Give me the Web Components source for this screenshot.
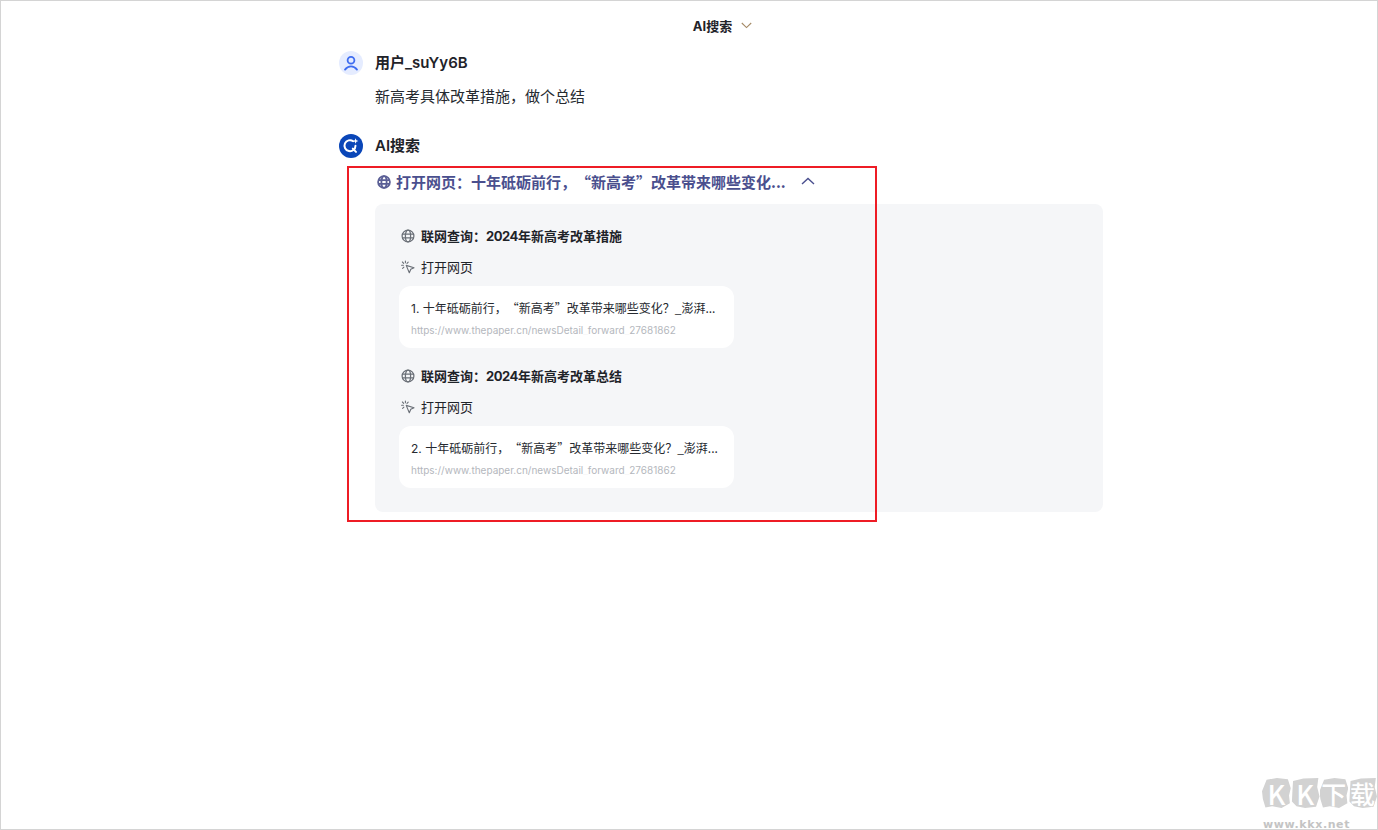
<!DOCTYPE html>
<html lang="zh-CN">
<head>
<meta charset="utf-8">
<title>AI搜索</title>
<style>
    html, body { margin: 0; height: 100%; background: #fff; }
    body { font-family: Inter, "Noto Sans CJK SC", sans-serif; color: #1f2329; }
</style>
</head>
<body>
<page-frame>
    <chat-header>AI搜索</chat-header>
    <chat-thread>
        <chat-message kind="user" name="用户_suYy6B">
            <p style="margin:0;font-size:15px;line-height:22px;color:#262a30">新高考具体改革措施，做个总结</p>
        </chat-message>
        <chat-message kind="ai" name="AI搜索">
            <step-panel titulo="打开网页：十年砥砺前行，“新高考”改革带来哪些变化...">
                <search-step query="联网查询：2024年新高考改革措施">
                    <result-card index="1" titulo="十年砥砺前行，“新高考”改革带来哪些变化？_澎湃..." url="https://www.thepaper.cn/newsDetail_forward_27681862"></result-card>
                </search-step>
                <search-step query="联网查询：2024年新高考改革总结">
                    <result-card index="2" titulo="十年砥砺前行，“新高考”改革带来哪些变化？_澎湃..." url="https://www.thepaper.cn/newsDetail_forward_27681862"></result-card>
                </search-step>
            </step-panel>
        </chat-message>
    </chat-thread>
    <red-frame></red-frame>
    <kk-watermark></kk-watermark>
</page-frame>

<script>
// iconos compartidos
const GLOBE = (color, w, size) => `
    <svg width="${size}" height="${size}" viewBox="0 0 14 14" fill="none" stroke="${color}" stroke-width="${w}">
        <circle cx="7" cy="7" r="5.9"/>
        <ellipse cx="7" cy="7" rx="2.6" ry="5.9"/>
        <path d="M1.1 5.1h11.8M1.1 8.9h11.8"/>
    </svg>`;

const CURSOR = `
    <svg width="14" height="14" viewBox="0 0 14 14" fill="none" stroke="#6b7078" stroke-width="1.1">
        <path d="M5.2 5.4l7.8 2.4-3.2 1.5-1.5 3.4z" stroke-linejoin="round"/>
        <path d="M4.4 1v1.8M1.4 2l1.3 1.3M.6 5.2h1.8M1.6 8.4l1.3-1.3M7.2 2.2L6 3.4" stroke-linecap="round"/>
    </svg>`;

class PageFrame extends HTMLElement {
    constructor() {
        super();
        this.attachShadow({ mode: 'open' }).innerHTML = `
            <style>
                :host {
                    display: block;
                    position: relative;
                    box-sizing: border-box;
                    width: 1378px;
                    height: 830px;
                    overflow: hidden;
                    border: 1px solid #d4d4d4;
                    background: #fff;
                }
            </style>
            <slot></slot>
        `;
    }
}
customElements.define('page-frame', PageFrame);

class ChatHeader extends HTMLElement {
    constructor() {
        super();
        this.attachShadow({ mode: 'open' }).innerHTML = `
            <style>
                :host {
                    display: flex;
                    justify-content: center;
                    align-items: center;
                    gap: 9px;
                    height: 20px;
                    padding: 14px 0 16px 67px;
                    font-size: 13px;
                    font-weight: 700;
                    color: #1f2329;
                }
                svg { display: block; }
            </style>
            <slot></slot>
            <svg width="11" height="7" viewBox="0 0 11 7" fill="none" stroke="#a58a66" stroke-width="1.1">
                <path d="M.8 1l4.7 4.6L10.2 1"/>
            </svg>
        `;
    }
}
customElements.define('chat-header', ChatHeader);

class ChatThread extends HTMLElement {
    constructor() {
        super();
        this.attachShadow({ mode: 'open' }).innerHTML = `
            <style>
                :host {
                    display: flex;
                    flex-direction: column;
                    gap: 26px;
                    width: 764px;
                    margin-left: 338px;
                }
            </style>
            <slot></slot>
        `;
    }
}
customElements.define('chat-thread', ChatThread);

class ChatMessage extends HTMLElement {
    constructor() {
        super();
        this.attachShadow({ mode: 'open' }).innerHTML = `
            <style>
                :host { display: block; }
                .head { display: flex; align-items: center; gap: 12px; height: 24px; }
                .avatar { width: 24px; height: 24px; flex: none; display: block; }
                .name { font-size: 15px; font-weight: 600; color: #1f2329; padding-bottom: 3px; }
                .body { padding: 11px 0 0 36px; }
            </style>
            <div class="head">
                <span class="avatar"></span>
                <span class="name"></span>
            </div>
            <div class="body"><slot></slot></div>
        `;
    }

    connectedCallback() {
        const s = this.shadowRoot;
        s.querySelector('.name').textContent = this.getAttribute('name');
        s.querySelector('.avatar').innerHTML = this.getAttribute('kind') === 'ai' ? `
            <svg width="24" height="24" viewBox="0 0 24 24" fill="none">
                <circle cx="12" cy="12" r="12" fill="#0a46b8"/>
                <path d="M14.2 7.2A5.5 5.5 0 1 0 16.5 11.7" stroke="#fff" stroke-width="2" stroke-linecap="round"/>
                <path d="M13.8 14.6l3.2 3.3" stroke="#fff" stroke-width="2" stroke-linecap="round"/>
                <path d="M16.6 4.2l.8 2 2 .8-2 .8-.8 2-.8-2-2-.8 2-.8z" fill="#fff"/>
            </svg>` : `
            <svg width="24" height="24" viewBox="0 0 24 24" fill="none">
                <circle cx="12" cy="12" r="12" fill="#e5ecff"/>
                <circle cx="12" cy="9.2" r="3.4" stroke="#3e6cf0" stroke-width="1.8"/>
                <path d="M6 18.6c1.6-2.2 3.6-3.2 6-3.2s4.4 1 6 3.2" stroke="#3e6cf0" stroke-width="1.8" stroke-linecap="round"/>
            </svg>`;
    }
}
customElements.define('chat-message', ChatMessage);

class StepPanel extends HTMLElement {
    constructor() {
        super();
        this.attachShadow({ mode: 'open' }).innerHTML = `
            <style>
                :host { display: block; }
                .head {
                    display: flex;
                    align-items: center;
                    height: 24px;
                    padding-left: 2px;
                    font-family: "Noto Sans CJK SC", sans-serif;
                    font-size: 15px;
                    font-weight: 700;
                    color: #4a4f8e;
                    text-spacing-trim: space-all;
                    font-feature-settings: "chws" 0, "palt" 0;
                }
                .ico { width: 14px; height: 14px; margin-right: 5px; }
                .ico svg, .up { display: block; }
                .ico svg { margin-top: 1px; }
                .up { margin-left: 15px; }
                .box {
                    display: flex;
                    flex-direction: column;
                    gap: 17px;
                    margin-top: 11px;
                    padding: 21px 0 24px 24px;
                    background: #f5f6f8;
                    border-radius: 8px;
                }
            </style>
            <div class="head">
                <span class="ico">${GLOBE('#5b5f96', 1.8, 14)}</span>
                <span class="tit"></span>
                <svg class="up" width="14" height="8" viewBox="0 0 14 8" fill="none" stroke="#4a4f8e" stroke-width="1.4">
                    <path d="M1 7l6-5.6L13 7"/>
                </svg>
            </div>
            <div class="box"><slot></slot></div>
        `;
    }

    connectedCallback() {
        this.shadowRoot.querySelector('.tit').textContent = this.getAttribute('titulo');
    }
}
customElements.define('step-panel', StepPanel);

class SearchStep extends HTMLElement {
    constructor() {
        super();
        this.attachShadow({ mode: 'open' }).innerHTML = `
            <style>
                :host { display: block; font-size: 13px; color: #1f2329; }
                .row { display: flex; align-items: center; gap: 6px; height: 20px; padding-left: 2px; }
                .row svg { display: block; margin-top: 2px; flex: none; }
                .q { font-weight: 700; margin-bottom: 11px; }
                .q .n { letter-spacing: -.45px; }
                .open { margin-bottom: 10px; }
            </style>
            <div class="row q">${GLOBE('#6b7078', 1.25, 14)}<span class="txt"></span></div>
            <div class="row open">${CURSOR}<span>打开网页</span></div>
            <slot></slot>
        `;
    }

    connectedCallback() {
        const q = this.getAttribute('query');
        this.shadowRoot.querySelector('.txt').innerHTML = q.replace(/\d+/, '<span class="n">$&</span>');
    }
}
customElements.define('search-step', SearchStep);

class ResultCard extends HTMLElement {
    constructor() {
        super();
        this.attachShadow({ mode: 'open' }).innerHTML = `
            <style>
                :host {
                    display: flex;
                    flex-direction: column;
                    box-sizing: border-box;
                    width: 335px;
                    height: 62px;
                    padding: 13px 12px 0;
                    background: #fff;
                    border-radius: 12px;
                }
                .t {
                    font-family: "Noto Sans CJK SC", sans-serif;
                    font-size: 12px;
                    line-height: 18px;
                    color: #262a30;
                    white-space: nowrap;
                    text-spacing-trim: space-all;
                    font-feature-settings: "chws" 0, "palt" 0;
                }
                .t .i { font-family: Inter, sans-serif; }
                .u {
                    font-size: 10px;
                    line-height: 12px;
                    height: 12px;
                    overflow: hidden;
                    margin-top: 6px;
                    color: #b4b7bd;
                    white-space: nowrap;
                }
                .u .b { opacity: .1; }
            </style>
            <div class="t"><span class="i"></span><span class="x"></span></div>
            <div class="u"></div>
        `;
    }

    connectedCallback() {
        const s = this.shadowRoot;
        s.querySelector('.i').textContent = `${this.getAttribute('index')}. `;
        s.querySelector('.x').textContent = this.getAttribute('titulo');
        // el guion bajo casi no se ve en la captura original
        s.querySelector('.u').innerHTML = this.getAttribute('url').replace(/_/g, '<span class="b">_</span>');
    }
}
customElements.define('result-card', ResultCard);

class RedFrame extends HTMLElement {
    constructor() {
        super();
        this.attachShadow({ mode: 'open' }).innerHTML = `
            <style>
                :host {
                    position: absolute;
                    left: 346px;
                    top: 165px;
                    box-sizing: border-box;
                    width: 530px;
                    height: 356px;
                    border: 2px solid #ee1c25;
                    pointer-events: none;
                }
            </style>
        `;
    }
}
customElements.define('red-frame', RedFrame);

class KkWatermark extends HTMLElement {
    constructor() {
        super();
        this.attachShadow({ mode: 'open' }).innerHTML = `
            <style>
                :host {
                    position: absolute;
                    right: 0;
                    bottom: 0;
                    width: 115px;
                    height: 51px;
                    font-family: "Noto Sans CJK SC", sans-serif;
                }
                .rocks { display: flex; gap: 0; height: 30px; }
                .rocks span {
                    flex: 1;
                    display: flex;
                    align-items: center;
                    justify-content: center;
                    background: #d2d2d2;
                    color: #fff;
                    font-size: 27px;
                    font-weight: 500;
                    line-height: 1;
                    clip-path: polygon(16% 6%, 52% 0, 90% 4%, 100% 34%, 94% 58%, 97% 84%, 68% 100%, 36% 94%, 12% 98%, 3% 70%, 0 44%);
                }
                .rocks span:nth-child(even) {
                    clip-path: polygon(8% 10%, 44% 2%, 96% 0, 92% 30%, 100% 62%, 88% 96%, 50% 100%, 20% 94%, 4% 78%, 6% 40%);
                }
                .rocks span:nth-child(n+3) { font-size: 25px; }
                .net {
                    margin: 10px 0 0 1px;
                    font-family: "DejaVu Sans", sans-serif;
                    font-size: 11px;
                    font-weight: 700;
                    line-height: 13px;
                    letter-spacing: .6px;
                    color: #c4c4c4;
                }
            </style>
            <div class="rocks"><span>K</span><span>K</span><span>下</span><span>载</span></div>
            <div class="net">www.kkx.net</div>
        `;
    }
}
customElements.define('kk-watermark', KkWatermark);
</script>
</body>
</html>
